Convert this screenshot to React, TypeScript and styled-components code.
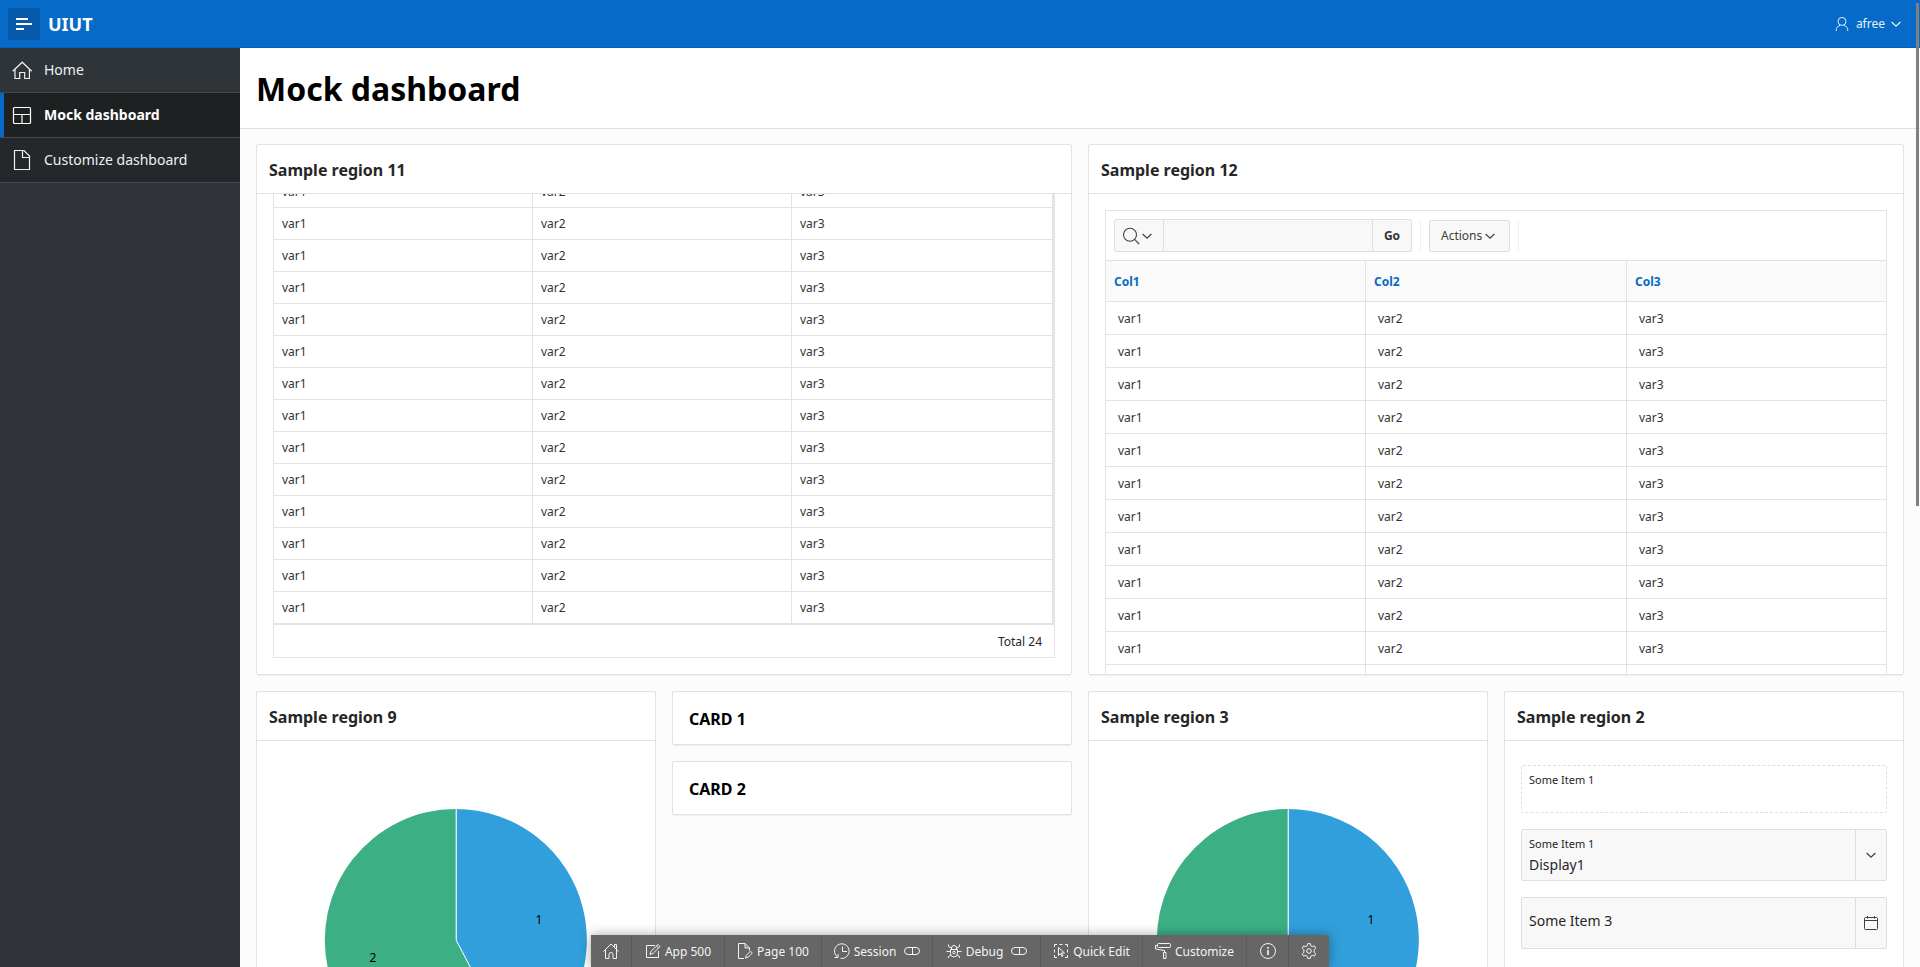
import React from "react";
import styled, { createGlobalStyle, css } from "styled-components";

const GlobalStyle = createGlobalStyle`
  * { box-sizing: border-box; }
  body {
    margin: 0;
    overflow: hidden;
    background: #fcfcfc;
    color: #262626;
    font-family: "Noto Sans", sans-serif;
    font-size: 12px;
    line-height: 16px;
  }
`;

const line = "#e2e2e2";

const Page = styled.div`
  position: relative;
  display: flex;
  flex-direction: column;
  height: 967px;
  overflow: hidden;
`;

const Header = styled.header`
  flex: none;
  display: flex;
  align-items: center;
  height: 48px;
  padding: 0 18px 0 8px;
  background: #056ac8;
  border-bottom: 1px solid #045fb4;
  color: #fff;
`;

const MenuButton = styled.button`
  display: flex;
  align-items: center;
  justify-content: center;
  width: 32px;
  height: 32px;
  margin: 1px 0 0;
  padding: 0;
  border: 0;
  border-radius: 2px;
  background: #0559a8;
`;

const Brand = styled.div`
  flex: 1;
  margin-left: 8px;
  padding-top: 1px;
  font-size: 18px;
  font-weight: 700;
  line-height: 24px;
`;

const User = styled.div`
  display: flex;
  align-items: center;
  color: #e6f0fa;
  span { margin: 0 5px 0 6px; padding-top: 1px; }
`;

const Columns = styled.div`
  flex: 1;
  display: flex;
  min-height: 0;
`;

const Nav = styled.nav`
  flex: none;
  width: 240px;
  background: #303339;
`;

const NavItem = styled.a<{ $state?: "active" | "sub" }>`
  display: flex;
  align-items: center;
  gap: 10px;
  height: 45px;
  padding-left: 10px;
  border-bottom: 1px solid #45494d;
  background: #2f3439;
  color: #f0f0f0;
  font-size: 14px;
  line-height: 20px;
  ${(p) =>
    p.$state === "active" &&
    css`
      background: #1e2122;
      box-shadow: inset 4px 0 0 #056ac8;
      color: #fff;
      font-weight: 700;
    `}
  ${(p) =>
    p.$state === "sub" &&
    css`
      background: #25282b;
    `}
`;

const Main = styled.main`
  flex: 1;
  display: flex;
  flex-direction: column;
  min-width: 0;
`;

const TitleBar = styled.div`
  flex: none;
  display: flex;
  align-items: center;
  height: 81px;
  padding: 2px 16px 0;
  background: #fff;
  border-bottom: 1px solid ${line};
`;

const Title = styled.h1`
  margin: 0;
  color: #000;
  font-size: 32px;
  font-weight: 700;
  line-height: 40px;
`;

const Dashboard = styled.div`
  flex: none;
  display: grid;
  grid-template-columns: repeat(4, 400px);
  grid-template-rows: 531px 460px;
  gap: 16px;
  padding: 15px 16px 0;
`;

const Region = styled.section<{ $wide?: boolean }>`
  display: flex;
  flex-direction: column;
  grid-column: span ${(p) => (p.$wide ? 2 : 1)};
  min-height: 0;
  overflow: hidden;
  background: #fff;
  border: 1px solid ${line};
  border-radius: 2px;
  box-shadow: 0 2px 2px -1px rgba(0, 0, 0, 0.06);
`;

const RegionTitle = styled.h2`
  flex: none;
  height: 49px;
  margin: 0;
  padding: 13px 12px 11px;
  border-bottom: 1px solid ${line};
  font-size: 16px;
  font-weight: 700;
  line-height: 24px;
`;

const RegionBody = styled.div<{ $end?: boolean }>`
  flex: 1;
  display: flex;
  flex-direction: column;
  justify-content: ${(p) => (p.$end ? "flex-end" : "flex-start")};
  min-height: 0;
  overflow: hidden;
  padding: ${(p) => (p.$end ? "0 16px 16px" : "16px 16px 0")};
`;

const Rows = styled.div`
  border-right: 2px solid #e4e4e4;
  border-bottom: 1px solid ${line};
`;

const Row = styled.div<{ $roomy?: boolean; $head?: boolean }>`
  flex: none;
  display: grid;
  grid-template-columns: ${(p) => (p.$roomy ? "259px 261px 1fr" : "258px 259px 1fr")};
  height: ${(p) => (p.$head ? 41 : p.$roomy ? 33 : 32)}px;
  border-bottom: 1px solid ${line};
  background: ${(p) => (p.$head ? "#fafafa" : "#fff")};
`;

const Cell = styled.div<{ $roomy?: boolean }>`
  display: flex;
  align-items: center;
  padding-top: ${(p) => (p.$roomy ? 2 : 0)}px;
  padding-left: ${(p) => (p.$roomy ? 12 : 8)}px;
  color: #333;
  & + & { border-left: 1px solid ${line}; }
`;

const HeadCell = styled(Cell)`
  padding-top: 2px;
  color: #056ac8;
  font-weight: 700;
`;

const Report = styled.div`
  flex: none;
  border: 1px solid ${line};
  border-top: 0;
`;

const Total = styled.div`
  height: 32px;
  padding: 9px 12px 0;
  text-align: right;
`;

const Interactive = styled.div`
  border: 1px solid ${line};
`;

const SearchBar = styled.div`
  display: flex;
  align-items: center;
  height: 50px;
  padding: 0 8px;
  border-bottom: 1px solid ${line};
`;

const SearchGroup = styled.div`
  display: flex;
  height: 33px;
  border: 1px solid #dfdfdf;
  border-radius: 2px;
  background: #f8f8f8;
`;

const SearchPick = styled.div`
  display: flex;
  align-items: center;
  gap: 1px;
  width: 49px;
  padding-left: 7px;
  border-right: 1px solid #dfdfdf;
  color: #404040;
`;

const SearchField = styled.div`
  width: 208px;
`;

const GoButton = styled.div`
  display: flex;
  align-items: center;
  justify-content: center;
  width: 39px;
  border-left: 1px solid #dfdfdf;
  color: #333;
  font-weight: 700;
`;

const ActionsButton = styled.div`
  display: flex;
  align-items: center;
  gap: 2px;
  width: 81px;
  height: 32px;
  margin-top: 1px;
  padding-left: 11px;
  border: 1px solid #dfdfdf;
  border-radius: 2px;
  background: #f8f8f8;
  color: #404040;
`;

const Separator = styled.div`
  width: 1px;
  height: 32px;
  margin: 0 8px;
  background: #efefef;
`;

const Cards = styled.div`
  display: flex;
  flex-direction: column;
  gap: 16px;
`;

const Card = styled.div`
  height: 54px;
  padding: 15px 16px 13px;
  background: #fff;
  border: 1px solid ${line};
  border-radius: 2px;
  box-shadow: 0 2px 2px -1px rgba(0, 0, 0, 0.06);
  color: #000;
  font-size: 16px;
  font-weight: 700;
  line-height: 24px;
`;

const Chart = styled.svg`
  display: block;
  flex: none;
  width: 398px;
  height: 400px;
  font-size: 12px;
`;

const ChartBody = styled.div`
  flex: 1;
  min-height: 0;
  overflow: hidden;
`;

const Form = styled.div`
  display: flex;
  flex-direction: column;
  gap: 16px;
  padding-top: 8px;
`;

const Field = styled.div<{ $dashed?: boolean }>`
  display: flex;
  height: ${(p) => (p.$dashed ? 48 : 52)}px;
  border: 1px ${(p) => (p.$dashed ? "dashed" : "solid")} #dfdfdf;
  border-radius: 2px;
  background: ${(p) => (p.$dashed ? "#fff" : "#f8f8f8")};
`;

const FieldText = styled.div<{ $centered?: boolean }>`
  flex: 1;
  display: flex;
  flex-direction: column;
  justify-content: ${(p) => (p.$centered ? "center" : "flex-start")};
  padding: ${(p) => (p.$centered ? "0 7px 4px" : "6px 7px 0")};
`;

const Label = styled.span`
  font-size: 11px;
  line-height: 16px;
  & + span { margin-top: 1px; }
`;

const Value = styled.span`
  font-size: 14px;
  line-height: 24px;
`;

const FieldButton = styled.div`
  display: flex;
  align-items: center;
  justify-content: center;
  width: 31px;
  border-left: 1px solid #dfdfdf;
  color: #404040;
`;

const DevBar = styled.div`
  position: absolute;
  left: 591px;
  bottom: 0;
  display: flex;
  height: 32px;
  background: #666;
  box-shadow: 0 0 12px rgba(0, 0, 0, 0.35);
  color: #f4f4f4;
`;

const DevItem = styled.div<{ $width: number }>`
  display: flex;
  align-items: center;
  justify-content: center;
  gap: 4px;
  width: ${(p) => p.$width}px;
  white-space: nowrap;
  & + & { border-left: 1px solid #5b5b5b; }
  span { padding-top: 1px; }
  svg + span + svg { margin-left: 4px; }
`;

const ScrollThumb = styled.div`
  position: absolute;
  top: 3px;
  right: 1px;
  width: 3px;
  height: 503px;
  background: #808080;
`;

const Icon = ({ children }: { children: React.ReactNode }) => (
  <svg width="16" height="16" viewBox="0 0 16 16" fill="none" stroke="currentColor" strokeWidth="1">
    {children}
  </svg>
);

const NavIcon = ({ children }: { children: React.ReactNode }) => (
  <svg width="24" height="24" viewBox="0 0 24 24" fill="none" stroke="currentColor" strokeWidth="1.2">
    {children}
  </svg>
);

const Chevron = () => (
  <svg width="12" height="12" viewBox="0 0 12 12" fill="none" stroke="currentColor">
    <path d="M1.6 4 L6 8.2 L10.4 4" strokeWidth="1.2" />
  </svg>
);

const Toggle = () => (
  <Icon>
    <rect x="0.5" y="4.5" width="15" height="7" rx="3.5" />
    <path d="M8.5 4.5v7" />
  </Icon>
);

const Pie = () => (
  <ChartBody>
    <Chart viewBox="0 0 398 400">
      <path d="M198.8 199 V68 A131 131 0 0 1 259.7 315 Z" fill="#309fdb" />
      <path d="M198.8 199 V68 A131 131 0 1 0 259.7 315 Z" fill="#3caf85" />
      <path d="M199.3 67.5 V199.3 L259.9 315" fill="none" stroke="#fff" />
      <text x="282" y="183" textAnchor="middle">1</text>
      <text x="116" y="221" textAnchor="middle">2</text>
    </Chart>
  </ChartBody>
);

const values = ["var1", "var2", "var3"];

export default function App() {
  return (
    <Page>
      <GlobalStyle />
      <Header>
        <MenuButton aria-label="Menu">
          <svg width="16" height="14" viewBox="0 0 16 14" fill="none" stroke="#fff" strokeWidth="2">
            <path d="M0 2h12M0 7h16M0 12h8" />
          </svg>
        </MenuButton>
        <Brand>UIUT</Brand>
        <User>
          <Icon>
            <circle cx="8" cy="5.4" r="4" />
            <path d="M2.3 15v-1.6c0-1.7 1-2.7 2.4-3.2l1.5-1M13.7 15v-1.6c0-1.7-1-2.7-2.4-3.2l-1.5-1" />
          </Icon>
          <span>afree</span>
          <Chevron />
        </User>
      </Header>
      <Columns>
        <Nav>
          <NavItem>
            <NavIcon>
              <path d="M2.7 13.2 L12.2 4.2 L21.7 13.2M5 11.2v9.3h4.7v-6h5v6h4.700V11.200" />
            </NavIcon>
            Home
          </NavItem>
          <NavItem $state="active">
            <NavIcon>
              <rect x="3.5" y="4.5" width="17" height="16" rx="1" />
              <path d="M3.5 11.5h17M12 11.5v9" />
            </NavIcon>
            Mock dashboard
          </NavItem>
          <NavItem $state="sub">
            <NavIcon>
              <path d="M4.5 2.5h9.500l5.500 5.500v13.500h-15zM12.500 2.500v7h7" />
            </NavIcon>
            Customize dashboard
          </NavItem>
        </Nav>
        <Main>
          <TitleBar>
            <Title>Mock dashboard</Title>
          </TitleBar>
          <Dashboard>
            <Region $wide>
              <RegionTitle>Sample region 11</RegionTitle>
              <RegionBody $end>
                <Report>
                  <Rows>
                    {Array.from({ length: 14 }, (_, i) => (
                      <Row key={i}>
                        {values.map((v) => (
                          <Cell key={v}>{v}</Cell>
                        ))}
                      </Row>
                    ))}
                  </Rows>
                  <Total>Total 24</Total>
                </Report>
              </RegionBody>
            </Region>
            <Region $wide>
              <RegionTitle>Sample region 12</RegionTitle>
              <RegionBody>
                <Interactive>
                  <SearchBar>
                    <SearchGroup>
                      <SearchPick>
                        <svg width="18" height="18" viewBox="0 0 18 18" fill="none" stroke="currentColor" strokeWidth="1.1">
                          <circle cx="8" cy="7.8" r="6.5" />
                          <path d="M12.6 12.4 L17.2 17" />
                        </svg>
                        <Chevron />
                      </SearchPick>
                      <SearchField />
                      <GoButton>Go</GoButton>
                    </SearchGroup>
                    <Separator />
                    <ActionsButton>
                      Actions
                      <Chevron />
                    </ActionsButton>
                    <Separator />
                  </SearchBar>
                  <Row $roomy $head>
                    <HeadCell>Col1</HeadCell>
                    <HeadCell>Col2</HeadCell>
                    <HeadCell>Col3</HeadCell>
                  </Row>
                  {Array.from({ length: 12 }, (_, i) => (
                    <Row key={i} $roomy>
                      {values.map((v) => (
                        <Cell key={v} $roomy>{v}</Cell>
                      ))}
                    </Row>
                  ))}
                </Interactive>
              </RegionBody>
            </Region>
            <Region>
              <RegionTitle>Sample region 9</RegionTitle>
              <Pie />
            </Region>
            <Cards>
              <Card>CARD 1</Card>
              <Card>CARD 2</Card>
            </Cards>
            <Region>
              <RegionTitle>Sample region 3</RegionTitle>
              <Pie />
            </Region>
            <Region>
              <RegionTitle>Sample region 2</RegionTitle>
              <RegionBody>
                <Form>
                  <Field $dashed>
                    <FieldText>
                      <Label>Some Item 1</Label>
                    </FieldText>
                  </Field>
                  <Field>
                    <FieldText>
                      <Label>Some Item 1</Label>
                      <Value>Display1</Value>
                    </FieldText>
                    <FieldButton>
                      <Chevron />
                    </FieldButton>
                  </Field>
                  <Field>
                    <FieldText $centered>
                      <Value>Some Item 3</Value>
                    </FieldText>
                    <FieldButton>
                      <Icon>
                        <rect x="1.5" y="2.5" width="13" height="12" rx="1" />
                        <path d="M1.5 5.5h13M4.5 1v2.5M11.5 1v2.5" />
                      </Icon>
                    </FieldButton>
                  </Field>
                </Form>
              </RegionBody>
            </Region>
          </Dashboard>
        </Main>
      </Columns>
      <DevBar>
        <DevItem $width={40}>
          <Icon>
            <path d="M0.5 8.5 L8 1 L15.5 8.5M2.5 7v8.5h3.5v-4a2 2 0 0 1 4 0v4h3.5V7M11.5 4V1.5h2V6.5" />
          </Icon>
        </DevItem>
        <DevItem $width={93}>
          <Icon>
            <path d="M10 2.5H1.5v12h12V8M5 11.5l1-3.2L13 1.5l2 2L8.2 10.3zM11.5 3l2 2" />
          </Icon>
          <span>App 500</span>
        </DevItem>
        <DevItem $width={97}>
          <Icon>
            <path d="M7 15.5H1.5V.5H8L12.5 5v2.5M8 .5V5h4.5M8.5 15l.8-2.7L13.5 8.2l1.8 1.8L11.2 14.2z" />
          </Icon>
          <span>Page 100</span>
        </DevItem>
        <DevItem $width={111}>
          <Icon>
            <path d="M3.5 14A7.3 7.3 0 1 1 6.5 15.3M8.5 3.5v5h4.5M0.5 14.5h3.5v-3.5" />
          </Icon>
          <span>Session</span>
          <Toggle />
        </DevItem>
        <DevItem $width={108}>
          <Icon>
            <path d="M4.5 6.5h7v4a3.5 3.5 0 0 1-7 0zM5.5 6.5V5a2.5 2.5 0 0 1 5 0v1.5M4.5 8.5H.5M11.5 8.5h4M5.5 5l-3-1.5V1.5M10.5 5l3-1.5V1.5M5 12l-2.5 1.5V15M11 12l2.5 1.5V15" />
            <circle cx="8" cy="9.5" r="1.3" />
          </Icon>
          <span>Debug</span>
          <Toggle />
        </DevItem>
        <DevItem $width={102}>
          <Icon>
            <path d="M1.5 4V1.5H4M6.5 1.5h3M12 1.5h2.5V4M14.5 6.5v3M14.5 12v2.5H12M4 14.5H1.5V12M1.5 9.5v-3M5.5 4.5v8l2-2 1.5 3 1-.5-1.5-3h3z" />
          </Icon>
          <span>Quick Edit</span>
        </DevItem>
        <DevItem $width={104}>
          <Icon>
            <path d="M3.5 0.5h11a1 1 0 0 1 1 1v2a1 1 0 0 1-1 1h-11a1 1 0 0 1-1-1v-2a1 1 0 0 1 1-1zM2.5 2.5H.5v3.5l9 1.5V9.5M8.5 9.5h2.5v6H8.5z" />
          </Icon>
          <span>Customize</span>
        </DevItem>
        <DevItem $width={42}>
          <Icon>
            <circle cx="8" cy="8" r="7.5" />
            <path d="M8 7v5M8 4v1.8" strokeWidth="1.6" />
          </Icon>
        </DevItem>
        <DevItem $width={41}>
          <Icon>
            <circle cx="8" cy="8" r="2.3" />
            <path d="M6.7.6h2.6l.5 2.2 1.5.8 2.1-.7 1.3 2.3-1.6 1.5v2.6l1.6 1.5-1.3 2.3-2.1-.7-1.5.8-.5 2.2H6.7l-.5-2.2-1.5-.8-2.1.7-1.3-2.3 1.6-1.5V6.700L1.300 5.200l1.300-2.300 2.100.7 1.500-.8z" />
          </Icon>
        </DevItem>
      </DevBar>
      <ScrollThumb />
    </Page>
  );
}
